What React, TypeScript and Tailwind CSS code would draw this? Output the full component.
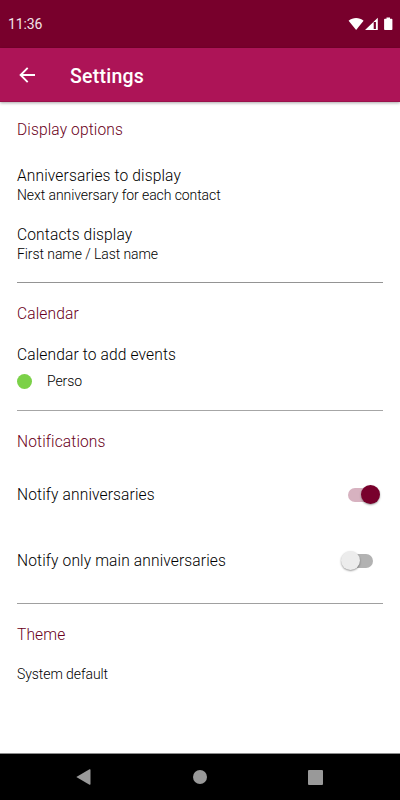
import React, { useState } from 'react';
import clsx from 'clsx';

const StatusBar = () => {
  return <div className="flex h-12 shrink-0 items-center justify-between bg-[#78002c] pl-2 pr-[7px] text-[#f3e3e8]">
      <span className="text-[14px] leading-5 tracking-[-0.1px]">11:36</span>
      <svg width="45" height="14" viewBox="0 0 45 14" fill="#fff">
        <path d="M0.6 3.8C5 0 11.200 0 15.600 3.800L8.100 13Z" />
        <path fillRule="evenodd" d="M29.800 0.800V13H17ZM25.700 5V12H27.900V5Z" />
        <path d="M38.500 0.500H42V1.700H43.600Q44.400 1.700 44.400 2.500V12.200Q44.400 13 43.600 13H36.900Q36.100 13 36.100 12.200V2.500Q36.100 1.700 36.900 1.700H38.500Z" />
      </svg>
    </div>;
};

const AppBar = () => {
  return <header className="relative flex h-[54px] shrink-0 items-center border-b border-[#99124b] bg-[#ad1457] pl-[19px] text-white shadow-[0_1px_3px_rgba(0,0,0,0.35)]">
      <button aria-label="Back">
        <svg width="16" height="16" viewBox="0 0 16 16" fill="none" stroke="currentColor" strokeWidth="1.9">
          <path d="M16 8H2M8.700 0.900L1.600 8L8.700 15.100" />
        </svg>
      </button>
      <h1 className="ml-[35px] pt-1 text-[19.5px] font-medium leading-6 tracking-[0.25px]">Settings</h1>
    </header>;
};

const SectionTitle = ({ children }: { children: React.ReactNode }) => {
  return <h2 className="text-[15.57px] font-light leading-5 tracking-[0.12px] text-[#6a0020]">{children}</h2>;
};

const ItemTitle = ({ children }: { children: React.ReactNode }) => {
  return <div className="text-[15.57px] font-light leading-5 tracking-[0.13px] text-black">{children}</div>;
};

const ItemValue = ({ children }: { children: React.ReactNode }) => {
  return <div className="text-[14px] font-light leading-[18px] tracking-[-0.08px] text-black">{children}</div>;
};

const Toggle = ({ label, checked, onChange }: { label: string; checked: boolean; onChange: () => void }) => {
  return <button role="switch" aria-label={label} aria-checked={checked} onClick={onChange} className="relative mr-[3px] h-5 w-[40px]">
      <span className={clsx('absolute left-[8px] top-[2.5px] h-3.5 w-[25px] rounded-full', checked ? 'bg-[#d7b2c0]' : 'bg-[#b2b2b2]')} />
      <span className={clsx('absolute top-[-0.5px] h-[19.5px] w-[19.5px] rounded-full shadow-[0_1px_2px_rgba(0,0,0,0.4)]', checked ? 'left-[20.5px] bg-[#78002c]' : 'left-[0.5px] bg-[#ececec]')} />
    </button>;
};

const NavigationBar = () => {
  return <nav className="flex h-[47px] shrink-0 items-center justify-between border-t border-[#8c8c8c] bg-black pl-[76px] pr-[77px]">
      <svg width="15" height="16" viewBox="0 0 15 16" fill="#999">
        <path d="M0.300 8L13.500 0.300Q14.500 0 14.500 1V15Q14.500 16 13.500 15.700Z" />
      </svg>
      <div className="ml-px h-3.5 w-3.5 rounded-full bg-[#999]" />
      <div className="h-[15px] w-[15px] rounded-[1px] bg-[#999]" />
    </nav>;
};

export default function App() {
  const [notifyAll, setNotifyAll] = useState(true);
  const [onlyMain, setOnlyMain] = useState(false);
  return <div className="flex h-[800px] w-[400px] flex-col overflow-hidden bg-white font-['Roboto',sans-serif]">
      <StatusBar />
      <AppBar />
      <main className="flex-1 px-[17px]">
        {/* Display */}
        <section className="h-[181px] border-b border-[#949494] pt-[18px]">
          <SectionTitle>Display options</SectionTitle>
          <div className="mt-[26px]">
            <ItemTitle>Anniversaries to display</ItemTitle>
            <ItemValue>Next anniversary for each contact</ItemValue>
          </div>
          <div className="mt-[21px]">
            <ItemTitle>Contacts display</ItemTitle>
            <ItemValue>First name / Last name</ItemValue>
          </div>
        </section>
        {/* Calendar */}
        <section className="h-32 border-b border-[#a6a6a6] pt-[21px]">
          <SectionTitle>Calendar</SectionTitle>
          <div className="mt-[21px]"><ItemTitle>Calendar to add events</ItemTitle></div>
          <div className="mt-[7px] flex items-center gap-[15px]">
            <span className="h-[15px] w-[15px] rounded-full bg-[#7bd148]" />
            <ItemValue>Perso</ItemValue>
          </div>
        </section>
        {/* Notifications */}
        <section className="h-[193px] border-b border-[#a0a0a0] pt-[21px]">
          <SectionTitle>Notifications</SectionTitle>
          <div className="mt-[33px] flex items-center justify-between">
            <ItemTitle>Notify anniversaries</ItemTitle>
            <Toggle label="Notify anniversaries" checked={notifyAll} onChange={() => setNotifyAll(!notifyAll)} />
          </div>
          <div className="mt-[46px] flex items-center justify-between">
            <ItemTitle>Notify only main anniversaries</ItemTitle>
            <Toggle label="Notify only main anniversaries" checked={onlyMain} onChange={() => setOnlyMain(!onlyMain)} />
          </div>
        </section>
        {/* Theme */}
        <section className="pt-[21px]">
          <SectionTitle>Theme</SectionTitle>
          <div className="mt-5"><ItemValue>System default</ItemValue></div>
        </section>
      </main>
      <NavigationBar />
    </div>;
}
